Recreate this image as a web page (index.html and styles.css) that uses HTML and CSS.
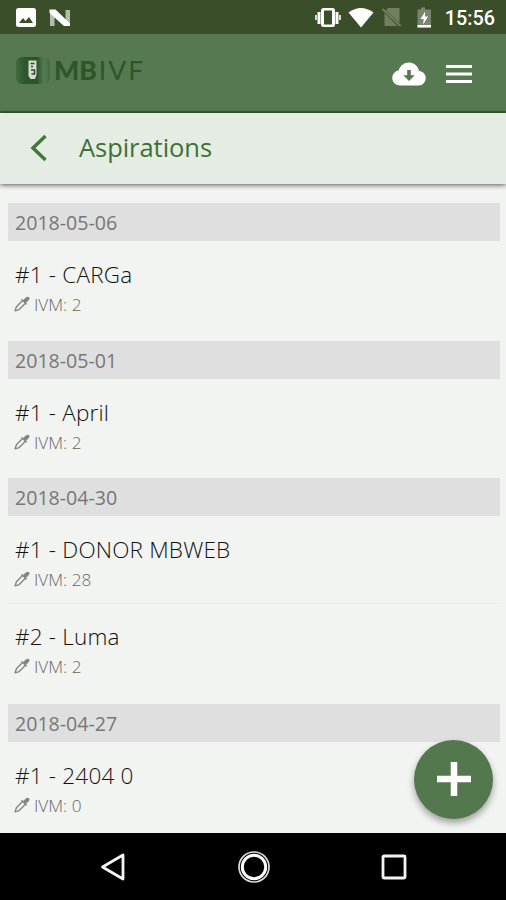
FILE: index.html
```html
<!DOCTYPE html>
<html lang="en">
<head>
<meta charset="utf-8">
<title>MBIVF - Aspirations</title>
<link rel="stylesheet" href="styles.css">
</head>
<body>
<svg class="defs" width="0" height="0" aria-hidden="true">
  <symbol id="dropper" viewBox="0 0 16 16">
    <path d="M8.7 4.2 2.4 10.7 1.1 14.8 5.2 13.6 11.7 7.1" fill="none" stroke="#858585" stroke-width="1.4" stroke-linejoin="round"/>
    <path d="M7.5 3.2 12.8 8.4M9.2 5 12 2.2Q13.5.8 14.6 1.8 15.4 2.9 13.8 4.2L11 6.9Z" fill="#858585" stroke="#858585" stroke-width="1.3"/>
  </symbol>
</svg>
<div class="phone">
  <div class="status">
    <svg class="status-left" width="60" height="22" viewBox="0 0 60 22">
      <rect x="1" y="2" width="20" height="19" rx="2.5" fill="#fff"/>
      <path d="M4 17 8 12 10.5 15 14 11 18 17Z" fill="#3b4e2a"/>
      <path d="M35 4V20H39.500V4ZM50.500 4V19H55V4Z" fill="#b4bcab"/>
      <path d="M34.500 3.500H40.500L55 17.500V20H49L34.500 7Z" fill="#fff"/>
    </svg>
    <div class="status-right">
      <svg width="120" height="24" viewBox="0 0 120 24">
        <rect x="7" y="2" width="14" height="19" rx="2.500" fill="#fff"/>
        <rect x="10" y="4.500" width="8" height="14" fill="#3b4e2a"/>
        <path d="M5 6V18M23 6V18" stroke="#fff" stroke-width="3"/>
        <path d="M2 9V14M26 9V14" stroke="#d7dcd2" stroke-width="2"/>
        <path d="M34.500 6.500Q47-2.500 59.500 6.500L47 21.500Z" fill="#fff"/>
        <path d="M74 2H85.500V17L72 4.500Z" fill="#71805f"/><path d="M70.500 7V20H83.500Z" fill="#71805f"/>
        <path d="M68.500 3 86.500 20" stroke="#71805f" stroke-width="2"/>
        <path d="M107 1.500H111V3.500H117V21.500H103.500V3.500H107Z" fill="#79866d"/>
        <path d="M103.500 19H117V21.500H103.500Z" fill="#fff"/>
        <path d="M111.200 5.500 106.500 13H109.700L109.100 18.500 114.200 10.500H110.900Z" fill="#fff"/>
      </svg>
      <span class="clock">15:56</span>
    </div>
  </div>
  <header class="appbar">
    <div class="brand">
      <svg width="36" height="30" viewBox="0 0 36 30">
        <defs><linearGradient id="badge"><stop offset="0" stop-color="#416b40"/><stop offset=".25" stop-color="#2d572e"/><stop offset=".6" stop-color="#295229"/><stop offset=".82" stop-color="#547b50"/><stop offset="1" stop-color="#416c40"/></linearGradient></defs>
        <rect x="1" y="1" width="34" height="27" rx="6" fill="url(#badge)"/>
        <path d="M13.500 4.500H21.500V19L20 23H15.500L13.500 20Z" fill="#d5dccf"/>
        <path d="M15.500 7.500H19.500M16 10.500H18M16 14H19.500V18H16.500" stroke="#304831" stroke-width="1.500" fill="none"/>
      </svg>
      <span class="brand-name"><b>MB</b><span>IVF</span></span>
    </div>
    <div class="actions">
      <svg width="34" height="24" viewBox="0 0 34 24">
        <path d="M8.500 23.500C3.500 23.500.3 20 .3 16 .3 12 3.200 9 6.500 8.500 8.300 3.500 12 .5 17 .5 22.200.5 26.200 4.200 27 9 31 9.300 33.700 12.200 33.700 16 33.700 20 30.700 23.500 26.500 23.500Z" fill="#fff"/>
        <path d="M15.200 8H18.800V13.200H22.700L17 19 11.300 13.200H15.200Z" fill="#557850"/>
      </svg>
      <svg width="26" height="20" viewBox="0 0 26 20"><path d="M0 2.500H26M0 10H26M0 17.500H26" stroke="#fff" stroke-width="3.200"/></svg>
    </div>
  </header>
  <div class="titlebar">
    <svg width="18" height="28" viewBox="0 0 18 28"><path d="M15.500 2 3 14 15.500 26" fill="none" stroke="#417a3a" stroke-width="3.500"/></svg>
    <h1>Aspirations</h1>
  </div>
  <main class="list">
    <section>
      <h2>2018-05-06</h2>
      <article><h3>#1 - CARGa</h3><p><svg><use href="#dropper"/></svg>IVM: 2</p></article>
    </section>
    <section>
      <h2>2018-05-01</h2>
      <article><h3>#1 - April</h3><p><svg><use href="#dropper"/></svg>IVM: 2</p></article>
    </section>
    <section>
      <h2>2018-04-30</h2>
      <article><h3>#1 - DONOR MBWEB</h3><p><svg><use href="#dropper"/></svg>IVM: 28</p></article>
      <article><h3>#2 - Luma</h3><p><svg><use href="#dropper"/></svg>IVM: 2</p></article>
    </section>
    <section>
      <h2>2018-04-27</h2>
      <article><h3>#1 - 2404 0</h3><p><svg><use href="#dropper"/></svg>IVM: 0</p></article>
    </section>
  </main>
  <nav class="navbar">
    <svg width="26" height="30" viewBox="0 0 26 30"><path d="M23 3V27L2.500 15Z" fill="none" stroke="#f4f4f4" stroke-width="2.800" stroke-linejoin="round"/></svg>
    <svg width="34" height="34" viewBox="0 0 34 34"><circle cx="17" cy="17" r="15" fill="none" stroke="#ddd" stroke-width="1.700"/><circle cx="17" cy="17" r="11.700" fill="none" stroke="#fff" stroke-width="3"/></svg>
    <svg width="26" height="26" viewBox="0 0 26 26"><rect x="2" y="2" width="22" height="22" rx="1" fill="none" stroke="#f4f4f4" stroke-width="2.800"/></svg>
  </nav>
  <button class="fab" aria-label="Add"><svg width="34" height="34" viewBox="0 0 34 34"><path d="M0 17H34M17 0V34" stroke="#fff" stroke-width="6.500"/></svg></button>
</div>
</body>
</html>
```
FILE: styles.css
```css
* { box-sizing: border-box; }
body, h1, h2, h3, p { margin: 0; }
body { font-family: "Open Sans", sans-serif; }
.defs { display: block; }
svg { display: block; flex: none; }
.phone {
  position: relative;
  display: flex;
  flex-direction: column;
  width: 506px;
  height: 900px;
  overflow: hidden;
  background: #f2f4f1;
}
.status {
  flex: none;
  display: flex;
  justify-content: space-between;
  height: 34px;
  padding: 6px 11px 0 15px;
  background: #3b4e2a;
}
.status-right { display: flex; gap: 11px; }
.clock { font: 500 19.800px/25px Roboto, sans-serif; color: #fff; }
.appbar {
  flex: none;
  display: flex;
  justify-content: space-between;
  height: 79px;
  padding: 22px 34px 0 15px;
  background: #577952;
  border-bottom: 2px solid #366229;
}
.brand { display: flex; height: 30px; }
.brand-name {
  display: flex;
  margin-left: 3px;
  font-family: Lato, sans-serif;
  font-size: 26.500px;
  line-height: 28px;
  color: #2d562b;
}
.brand-name b { font-weight: 900; }
.brand-name span { margin-left: 2px; font-weight: 400; letter-spacing: 2px; }
.actions { display: flex; align-items: center; gap: 20px; height: 35px; }
.titlebar {
  position: relative;
  flex: none;
  display: flex;
  align-items: center;
  gap: 31px;
  height: 71px;
  padding: 0 0 1px 30px;
  background: #e5ece3;
  box-shadow: 0 1px 5px rgba(0, 0, 0, .65);
}
.titlebar h1 {
  margin-top: -3px;
  font-size: 25.500px;
  font-weight: 500;
  letter-spacing: -.050px;
  color: #3d7135;
}
.list { flex: 1; min-height: 0; overflow: hidden; padding: 19px 6px 0 8px; }
section { margin-bottom: 12.500px; }
h2 {
  height: 38px;
  padding-left: 7px;
  background: #dfdfdf;
  font-size: 19.600px;
  font-weight: 400;
  line-height: 39px;
  color: #777;
}
article { height: 87px; padding: 19px 7px 0; }
article + article { height: 88px; padding-top: 18px; border-top: 1px solid #e9ebe8; }
h3 {
  font-size: 22.500px;
  font-weight: 300;
  letter-spacing: .200px;
  line-height: 30px;
  color: #111;
}
p { display: flex; align-items: center; font-size: 17.200px; font-weight: 300; line-height: 30px; color: #666; }
p svg { width: 16px; height: 16px; margin: -2px 4px 0 -1px; }
.navbar {
  flex: none;
  display: flex;
  align-items: center;
  justify-content: space-between;
  height: 67px;
  padding: 0 99px 0 100px;
  background: #000;
}
.fab {
  position: absolute;
  left: 414px;
  top: 740px;
  display: grid;
  place-items: center;
  width: 79px;
  height: 79px;
  padding: 0 0 2px 1px;
  border: 0;
  border-radius: 50%;
  background: #54784d;
  box-shadow: 0 4px 7px rgba(0, 0, 0, .35);
}
```
